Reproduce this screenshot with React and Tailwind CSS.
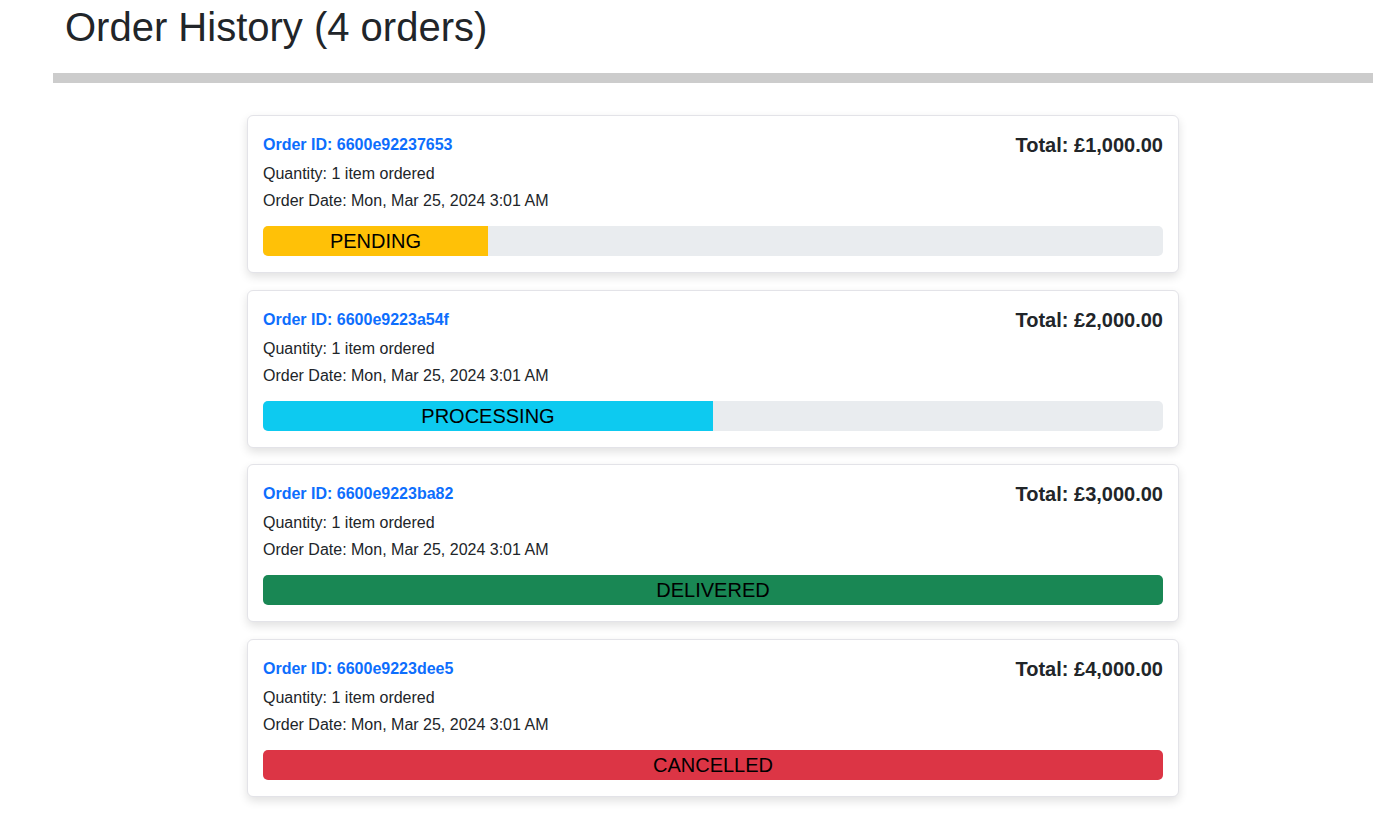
import React from 'react';

const orders = [
  { id: '6600e92237653', total: '£1,000.00', status: 'PENDING', pct: 25, bar: 'bg-[#ffc107]' },
  { id: '6600e9223a54f', total: '£2,000.00', status: 'PROCESSING', pct: 50, bar: 'bg-[#0dcaf0]' },
  { id: '6600e9223ba82', total: '£3,000.00', status: 'DELIVERED', pct: 100, bar: 'bg-[#198754]' },
  { id: '6600e9223dee5', total: '£4,000.00', status: 'CANCELLED', pct: 100, bar: 'bg-[#dc3545]' },
];

function OrderCard({ order }) {
  return (
    <div className="w-[932px] bg-white rounded-md border border-[#e3e3e8] shadow-[0_4px_10px_rgba(0,0,0,0.12)] px-[15px] pt-[17px] pb-4">
      <div className="flex items-center justify-between h-6">
        <span className="text-[16px] font-bold text-[#0d6efd]">Order ID: {order.id}</span>
        <span className="text-[20px] font-bold text-[#212529]">Total: {order.total}</span>
      </div>
      <p className="mt-[5px] text-[16px] leading-6 text-[#212529]">Quantity: 1 item ordered</p>
      <p className="mt-[3px] text-[16px] leading-6 text-[#212529]">Order Date: Mon, Mar 25, 2024 3:01 AM</p>
      <div className="mt-[13px] h-[30px] w-full rounded-[5px] bg-[#e9ecef] overflow-hidden flex">
        <div
          className={`${order.bar} h-full flex items-center justify-center text-[20px] text-black`}
          style={{ width: `${order.pct}%` }}
        >
          {order.status}
        </div>
      </div>
    </div>
  );
}

export default function App() {
  return (
    <div className="min-h-screen bg-white font-['Liberation_Sans',Arial,sans-serif] pl-[53px] pr-[17px] pt-[3px] pb-5">
      <h1 className="ml-3 text-[40px] leading-[48px] text-[#212529]">Order History (4 orders)</h1>
      <div className="mt-[22px] h-[10px] bg-[#cccccc]" />
      <div className="mt-[32px] flex flex-col items-center gap-[16.5px]">
        {orders.map((o) => (
          <OrderCard key={o.id} order={o} />
        ))}
      </div>
    </div>
  );
}
